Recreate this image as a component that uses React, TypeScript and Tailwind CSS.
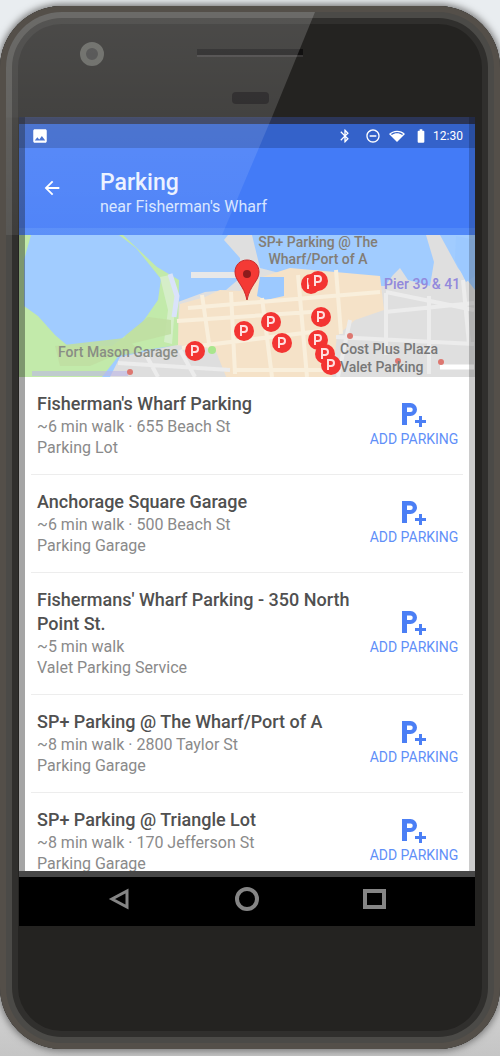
import React from "react";
import {
  MdArrowBack,
  MdBatteryFull,
  MdBluetooth,
  MdImage,
  MdNetworkWifi,
  MdRemoveCircleOutline,
} from "react-icons/md";

type Place = { name: string; detail: string; kind: string };

const places: Place[] = [
  { name: "Fisherman's Wharf Parking", detail: "~6 min walk · 655 Beach St", kind: "Parking Lot" },
  { name: "Anchorage Square Garage", detail: "~6 min walk · 500 Beach St", kind: "Parking Garage" },
  { name: "Fishermans' Wharf Parking - 350 North Point St.", detail: "~5 min walk", kind: "Valet Parking Service" },
  { name: "SP+ Parking @ The Wharf/Port of A", detail: "~8 min walk · 2800 Taylor St", kind: "Parking Garage" },
  { name: "SP+ Parking @ Triangle Lot", detail: "~8 min walk · 170 Jefferson St", kind: "Parking Garage" },
];

const markers: [number, number][] = [
  [195, 351], [244, 331], [271, 322], [282, 343], [311, 284], [318, 281],
  [321, 317], [318, 340], [325, 354], [331, 365],
];

function AddParkingIcon() {
  return (
    <svg viewBox="0 0 26 26" className="h-[26px] w-[26px]" aria-hidden="true">
      <path fill="currentColor" d="M1 1h8.500a6.500 6.500 0 0 1 0 13H6v9H1zM6 5.500v4.500h3.500a2.250 2.250 0 0 0 0-4.500z" />
      <path fill="currentColor" d="M18 14h3v4h4v3h-4v4h-3v-4h-4v-3h4z" />
    </svg>
  );
}

function ParkingMap() {
  return (
    <svg
      viewBox="19 235 456 142"
      preserveAspectRatio="xMidYMid slice"
      className="block h-[142px] w-full"
      role="img"
      aria-label="Map of parking near Fisherman's Wharf"
    >
      <rect x="19" y="235" width="456" height="142" fill="#a1ccff" />
      {/* land */}
      <path fill="#dfdfdf" d="M178 302L205 292 226 290 240 278 240 258 224 240 228 235H252L260 268 330 286 385 286 393 275 400 268 408 280 430 286 434 262 426 235H440L458 268 475 290V377H170z" />
      <path fill="#f5e2c8" d="M180 304L205 297 220 290 240 291 262 277 290 268 380 276 384 310 355 320 337 336 332 377H226L215 350 176 346z" />
      <path fill="#dedede" d="M110 377L120 357 176 345 215 349 226 377z" />
      {/* park around the lagoon */}
      <path fill="#c2eaaa" d="M19 235H31L24 260V306L38 316 55 335 68 346H112L142 323 158 300 161 279 136 248 119 235H123L157 267 179 280 178 345 120 354 102 377H19z" />
      <path fill="#d5eec8" d="M160 277L170 275 176 294 172 344 164 342 168 310z" />
      <path fill="#c0dfa2" d="M126 335L148 317 171 320 171 334 118 347zM55 346L125 338 142 352 111 357 90 366H60z" opacity=".9" />
      <path fill="none" stroke="#dae3fa" strokeWidth="5" d="M170 274L177 296 174 317" />
      <path fill="none" stroke="#e8e8e8" strokeWidth="6" d="M191 275H241" />
      <path fill="#9cc9ff" d="M260 277H284V296L266 300 257 296zM456 236L475 240V276L466 282 455 260z" />
      {/* streets */}
      <g fill="none" stroke="#f9efdc" strokeWidth="4">
        <path d="M177 321L326 311M182 348L320 331M202 295L210 350M231 292L235 374M262 298L272 377M298 275L307 377M336 270L341 334M188 308L380 292M236 370H330" />
      </g>
      <g fill="none" stroke="#ececec" strokeWidth="4">
        <path d="M385 312L474 303M386 292L474 310M386 293V355M429 296V374M463 280L469 344M336 337L474 344M118 363L230 370M145 353L158 377M350 320L338 377M180 350L195 377" />
      </g>
      <path stroke="#fff" strokeWidth="5" d="M440 367H474" />
      <path fill="#bdb6e6" d="M32 371H128V376H32z" opacity=".6" />
      <g fill="#dd7770">
        <circle cx="350" cy="336" r="3" />
        <circle cx="398" cy="361" r="3" />
        <circle cx="441" cy="362" r="3" />
        <circle cx="130" cy="372" r="3" />
      </g>
      <circle cx="212" cy="350" r="4" fill="#a9e68d" />
      {/* labels */}
      <g fontFamily="Roboto, sans-serif" fontSize="14" fontWeight="500">
        <g fill="#837d75">
          <text x="318" y="247" textAnchor="middle">SP+ Parking @ The</text>
          <text x="318" y="264" textAnchor="middle">Wharf/Port of A</text>
        </g>
        <text x="384" y="289" fill="#9289dc">Pier 39 &amp; 41</text>
        <text x="58" y="357" fill="#898d85">Fort Mason Garage</text>
        <g fill="#777">
          <text x="340" y="354">Cost Plus Plaza</text>
          <text x="340" y="372">Valet Parking</text>
        </g>
      </g>
      {/* parking markers */}
      {markers.map(([x, y]) => (
        <g key={`${x}-${y}`}>
          <circle cx={x} cy={y} r="10" fill="#f33432" />
          <path d={`M${x - 3} ${y + 5}v-10h3a3 3 0 0 1 0 6h-3`} fill="none" stroke="#ffdede" strokeWidth="2" />
        </g>
      ))}
      <path fill="#f43a35" stroke="#c92b2b" d="M247 260c-7 0-12 5-12 12 0 9 9 13 12 28 3-15 12-19 12-28 0-7-5-12-12-12z" />
      <circle cx="247" cy="274" r="4" fill="#8d1c1c" />
    </svg>
  );
}

function PlaceRow({ place }: { place: Place }) {
  return (
    <li className="mx-3 flex items-center border-b border-[#ededed] pt-[15px] pb-4">
      <div className="min-w-0 flex-1 pl-[6px]">
        <h2 className="text-[18px] leading-6 font-medium text-[#505050]">{place.name}</h2>
        <p className="text-base leading-[21px] text-[#8a8a8a]">{place.detail}</p>
        <p className="text-base leading-[21px] text-[#8a8a8a]">{place.kind}</p>
      </div>
      <button
        type="button"
        className="flex w-[98px] shrink-0 flex-col items-center gap-[2px] text-[#4b7ff5]"
      >
        <AddParkingIcon />
        <span className="text-sm leading-[18px] whitespace-nowrap text-[#5f8ff8]">ADD PARKING</span>
      </button>
    </li>
  );
}

export default function App() {
  return (
    <main className="bg-[linear-gradient(to_bottom,#e9edf0_0,#e9edf0_120px,#dedede_950px,#c5c5c5_100%)] pt-[6px] pb-[7px] font-[Roboto,sans-serif]">
      <div className="relative rounded-[62px] bg-[#242321] shadow-[inset_0_0_0_6px_#544f49,inset_0_0_0_12px_#4b4a47,inset_0_0_0_18px_#302f2d,0_0_7px_2px_#777777]">
        <div className="flex h-[111px] items-start pl-20">
          <span className="mt-9 h-6 w-6 rounded-full border-[6px] border-[#585954] bg-[#3a3a3a]" />
          <div className="ml-[93px] flex w-[106px] flex-col items-center pt-[43px]">
            <span className="h-2 w-full border-b-2 border-[#383636] bg-[#111010]" />
            <span className="mt-[35px] h-3 w-[37px] rounded-sm bg-[#0f0d0e]" />
          </div>
        </div>

        <div className="relative mr-[25px] ml-[19px] bg-white">
          <div className="flex h-[31px] items-center border-t-[7px] border-[#2b3558] bg-[#3462ca] pr-3 pl-3 text-white">
            <MdImage className="h-[18px] w-[18px]" />
            <div className="ml-auto flex items-center">
              <MdBluetooth className="mr-3 h-4 w-4" />
              <MdRemoveCircleOutline className="mr-2 h-4 w-4" />
              <MdNetworkWifi className="mr-2 h-4 w-4" />
              <MdBatteryFull className="mr-1 h-4 w-4" />
              <span className="text-xs leading-6">12:30</span>
            </div>
          </div>
          <header className="flex h-[87px] items-center border-b-[7px] border-[#5088f8] bg-[#437bf7] pl-[22px] text-white">
            <button type="button" aria-label="Back" className="w-[59px]">
              <MdArrowBack className="h-[22px] w-[22px]" />
            </button>
            <div className="pt-[10px]">
              <h1 className="text-[23px] leading-7 font-medium text-[#eaf1ff]">Parking</h1>
              <p className="text-base leading-5 text-[#d7e5ff]">near Fisherman's Wharf</p>
            </div>
          </header>
          <ParkingMap />
          <ul className="h-[494px] overflow-hidden">
            {places.map((place) => (
              <PlaceRow key={place.name} place={place} />
            ))}
          </ul>
          <div className="pointer-events-none absolute inset-0 border-r-[6px] border-l-[6px] border-r-black/20 border-l-black/35" />
        </div>

        <nav className="mr-[25px] ml-[19px] grid h-[55px] grid-cols-3 place-items-center border-t-[6px] border-[#484848] bg-black px-[38px] pb-[6px] text-[#858585]">
          <button type="button" aria-label="Back">
            <svg viewBox="0 0 26 26" className="h-[26px] w-[26px]">
              <path d="M20 5v16L5 13z" fill="none" stroke="currentColor" strokeWidth="3" />
            </svg>
          </button>
          <button type="button" aria-label="Home">
            <svg viewBox="0 0 26 26" className="h-[26px] w-[26px]">
              <circle cx="13" cy="13" r="10" fill="none" stroke="currentColor" strokeWidth="4" />
            </svg>
          </button>
          <button type="button" aria-label="Recent apps">
            <svg viewBox="0 0 26 26" className="h-[26px] w-[26px]">
              <rect x="4" y="5" width="19" height="16" fill="none" stroke="currentColor" strokeWidth="4" />
            </svg>
          </button>
        </nav>
        <div className="h-[123px]" />

        {/* diagonal glass reflection */}
        <div className="pointer-events-none absolute top-[6px] right-0 left-[6px] h-[223px] rounded-tl-[56px] bg-[linear-gradient(to_bottom,rgba(255,255,255,0.18)_0,rgba(255,255,255,0.14)_105px,rgba(255,255,255,0.12)_106px,rgba(255,255,255,0.07)_223px)] [clip-path:polygon(0_0,309px_0,266px_105px,216px_223px,0_223px)]" />
      </div>
    </main>
  );
}
